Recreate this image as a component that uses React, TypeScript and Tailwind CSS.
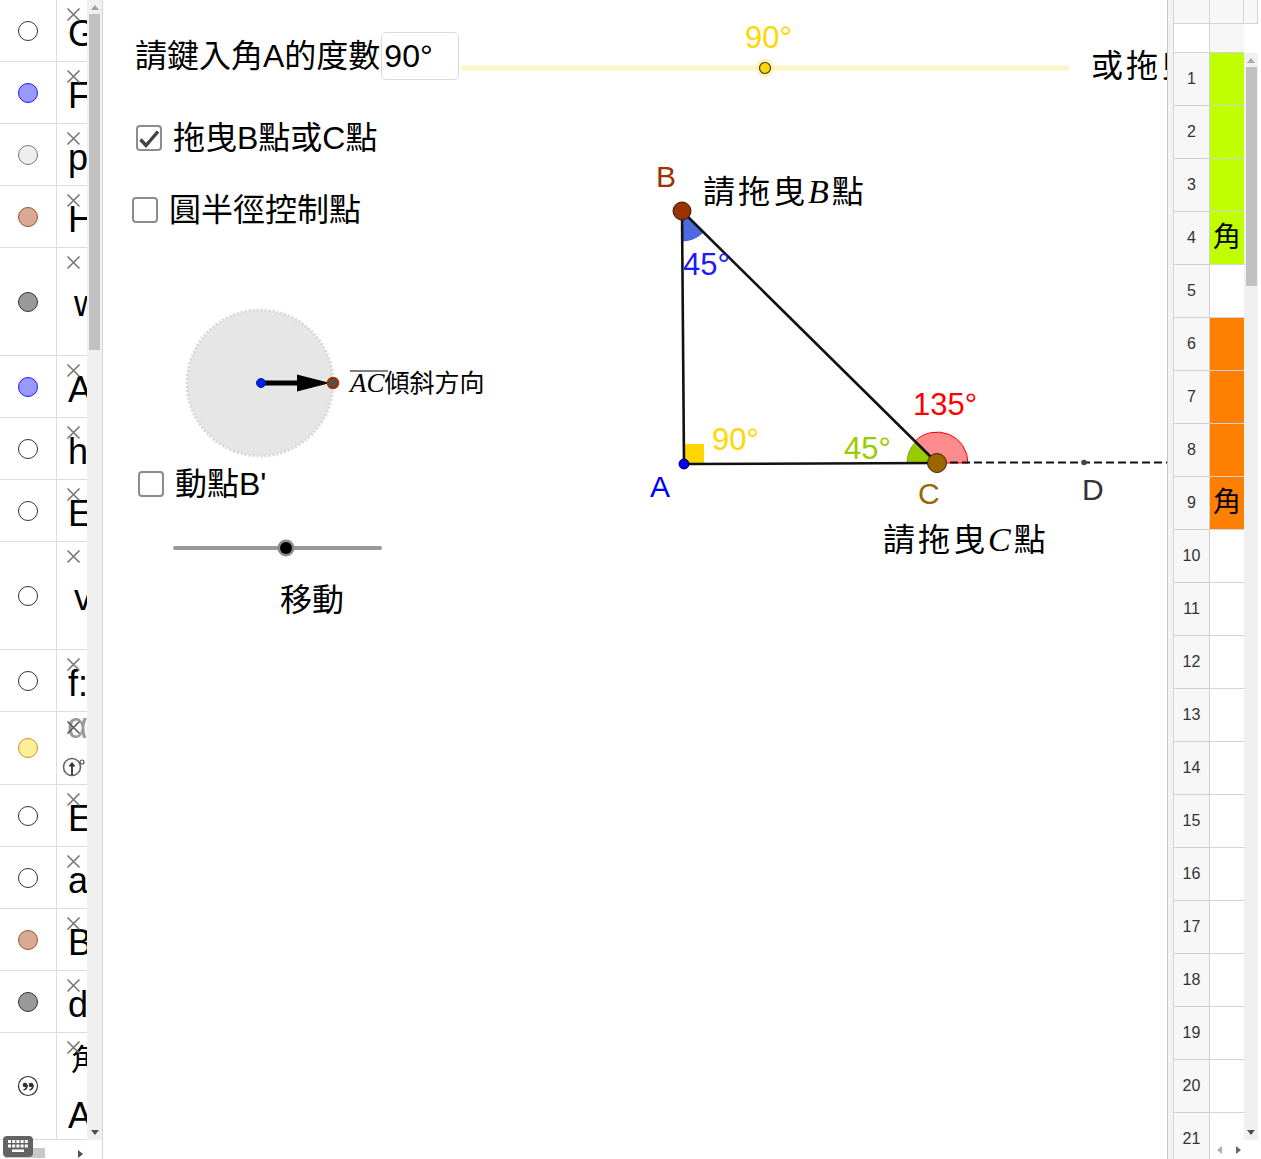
import React from 'react'

type AlgebraRow = {
  h: string
  dot: string
  label: string
  kind?: 'tall' | 'alpha' | 'text'
}

const algebraRows: AlgebraRow[] = [
  { h: 'h-[62px]', dot: 'white', label: 'G' },
  { h: 'h-[62px]', dot: 'blue', label: 'F' },
  { h: 'h-[62px]', dot: 'light', label: 'p' },
  { h: 'h-[62px]', dot: 'tan', label: 'H' },
  { h: 'h-[108px]', dot: 'gray', label: 'w', kind: 'tall' },
  { h: 'h-[62px]', dot: 'blue', label: 'A' },
  { h: 'h-[62px]', dot: 'white', label: 'h' },
  { h: 'h-[62px]', dot: 'white', label: 'E' },
  { h: 'h-[108px]', dot: 'white', label: 'v', kind: 'tall' },
  { h: 'h-[62px]', dot: 'white', label: 'f:' },
  { h: 'h-[73px]', dot: 'yellow', label: 'α', kind: 'alpha' },
  { h: 'h-[62px]', dot: 'white', label: 'E' },
  { h: 'h-[62px]', dot: 'white', label: 'a' },
  { h: 'h-[62px]', dot: 'tan', label: 'B' },
  { h: 'h-[62px]', dot: 'gray', label: 'd' },
  { h: 'flex-1', dot: 'quote', label: 'A', kind: 'text' },
]

const dotStyles: Record<string, string> = {
  white: 'bg-white border-[#333333]',
  blue: 'bg-[#9999ff] border-[#1a1aff]',
  light: 'bg-[#eeeeee] border-[#7a7a7a]',
  tan: 'bg-[#d8aa93] border-[#a0522d]',
  gray: 'bg-[#999999] border-[#333333]',
  yellow: 'bg-[#ffee99] border-[#c8901e]',
}

const serif = "'Liberation Serif', serif"

const Cross = () => (
  <svg width="15" height="15" viewBox="0 0 15 15" className="absolute left-[9px] top-[7px]">
    <path d="M1.5 1.5 L13.5 13.5 M13.5 1.5 L1.5 13.5" stroke="#777777" strokeWidth="1.6" />
  </svg>
)

const Dot = ({ kind }: { kind: string }) => {
  if (kind === 'quote') {
    return (
      <svg width="22" height="22" viewBox="0 0 22 22">
        <circle cx="11" cy="11" r="9.5" fill="white" stroke="#333" strokeWidth="1.2" />
        <circle cx="8" cy="10" r="2.3" fill="#333" />
        <path d="M10.2 10 C10.2 13 8.5 14.5 6.5 15" stroke="#333" strokeWidth="1.6" fill="none" />
        <circle cx="14" cy="10" r="2.3" fill="#333" />
        <path d="M16.2 10 C16.2 13 14.5 14.5 12.5 15" stroke="#333" strokeWidth="1.6" fill="none" />
      </svg>
    )
  }
  return <div className={`h-[20px] w-[20px] rounded-full border ${dotStyles[kind]}`} />
}

const AlgebraView = () => (
  <div className="relative flex h-full w-[103px] shrink-0 flex-col border-r border-[#d6d6d6]">
    <div className="flex min-h-0 flex-1">
      <div className="flex w-[87px] flex-col overflow-hidden">
        {algebraRows.map((r, i) => (
          <div key={i} className={`flex shrink-0 border-b border-[#dcdcdc] ${r.h}`}>
            <div className="flex w-[57px] shrink-0 items-center justify-center border-r border-[#dcdcdc]">
              <Dot kind={r.dot} />
            </div>
            <div className="relative flex-1 overflow-hidden whitespace-nowrap text-[36px]">
              {r.kind === 'alpha' ? (
                <>
                  <div className="pl-[10px] pt-[4px] leading-[20px] text-[#9a9a9a]">α</div>
                  <svg width="15" height="15" viewBox="0 0 15 15" className="absolute left-[9px] top-[8px]">
                    <path d="M1.5 1.5 L13.5 13.5 M13.5 1.5 L1.5 13.5" stroke="#555" strokeWidth="1.6" />
                  </svg>
                  <svg width="26" height="22" viewBox="0 0 26 22" className="ml-[4px] mt-[20px]">
                    <circle cx="11" cy="11" r="8.5" fill="none" stroke="#666" strokeWidth="1.6" />
                    <path d="M11 19 L11 8 M8.5 10.5 L11 7.5 L13.5 10.5" stroke="#333" strokeWidth="1.8" fill="none" />
                    <circle cx="21" cy="6" r="2" fill="none" stroke="#555" strokeWidth="1.2" />
                  </svg>
                </>
              ) : r.kind === 'text' ? (
                <>
                  <Cross />
                  <div className="pl-[14px] pt-[12px] text-[30px] leading-[30px]">角</div>
                  <div className="mt-[23px] pl-[11px] leading-[36px]">A</div>
                </>
              ) : (
                <>
                  <Cross />
                  <div
                    className={
                      r.kind === 'tall'
                        ? 'pl-[17px] pt-[38px] leading-[36px]'
                        : 'pl-[11px] pt-[16px] leading-[36px]'
                    }
                  >
                    {r.label}
                  </div>
                </>
              )}
            </div>
          </div>
        ))}
      </div>
      <div className="relative w-[15px] bg-[#f0f0f0]">
        <svg width="8" height="5" viewBox="0 0 8 5" className="absolute left-[4px] top-[5px]">
          <polygon points="0,5 4,0 8,5" fill="#a0a0a0" />
        </svg>
        <div className="absolute left-[2px] top-[14px] h-[336px] w-[11px] bg-[#c1c1c1]" />
        <svg width="8" height="5" viewBox="0 0 8 5" className="absolute bottom-[5px] left-[4px]">
          <polygon points="0,0 8,0 4,5" fill="#505050" />
        </svg>
      </div>
    </div>
    <div className="relative h-[19px] bg-white">
      <div className="absolute left-[5px] top-[8px] h-[10px] w-[40px] bg-[#c8c8c8]" />
      <svg width="5" height="8" viewBox="0 0 5 8" className="absolute left-[78px] top-[10px]">
        <polygon points="0,0 5,4 0,8" fill="#505050" />
      </svg>
    </div>
    <svg width="30" height="21" viewBox="0 0 30 21" className="absolute bottom-[2px] left-[3px]">
      <rect x="0" y="0" width="30" height="21" rx="4" fill="#636363" />
      {[0, 1, 2, 3, 4].map((c) => (
        <g key={c}>
          <rect x={5 + c * 4.2} y="4" width="3" height="3" fill="white" />
          <rect x={5 + c * 4.2} y="8.5" width="3" height="3" fill="white" />
        </g>
      ))}
      <rect x="9" y="13.5" width="12" height="2.5" fill="white" />
    </svg>
  </div>
)

const CheckRow = ({ checked, label, className }: { checked: boolean; label: React.ReactNode; className: string }) => (
  <div className={`absolute flex items-center gap-[11px] ${className}`}>
    <div className="h-[26px] w-[26px] rounded-[4px] border-2 border-[#8c8c8c] bg-white">
      {checked && (
        <svg width="22" height="22" viewBox="0 0 22 22">
          <path d="M2.5 12.5 L8 18.5 L20 4.5" stroke="#444" strokeWidth="3.4" fill="none" />
        </svg>
      )}
    </div>
    <span className="whitespace-nowrap text-[32px] leading-[32px]">{label}</span>
  </div>
)

const GraphicsView = () => (
  <div className="relative h-full w-[1064px] shrink-0 overflow-hidden bg-white">
    <svg width="1064" height="1159" viewBox="103 0 1064 1159" className="absolute left-0 top-0">
      {/* angle slider */}
      <line x1="463" y1="68" x2="1067" y2="68" stroke="#fff4c6" strokeWidth="5" strokeLinecap="round" />
      <circle cx="765" cy="68" r="9" fill="#fff0b5" />
      <circle cx="765" cy="68" r="5.5" fill="#ffd700" stroke="#3a3a3a" strokeWidth="1.2" />
      <text x="745" y="48" fontSize="31" fill="#ffd700">90°</text>
      <text x="1091" y="77" fontSize="32" letterSpacing="3">或拖曳</text>

      {/* direction circle */}
      <circle cx="260" cy="383" r="73" fill="#e6e6e6" stroke="#d9d9d9" strokeWidth="3" strokeDasharray="2 2" />
      <line x1="261" y1="383" x2="300" y2="383" stroke="#000" strokeWidth="5" />
      <polygon points="297,374.5 330,383 297,391.5" fill="#000" />
      <circle cx="261" cy="383" r="4.5" fill="#0022ee" stroke="#001a99" strokeWidth="1" />
      <circle cx="333" cy="383" r="5" fill="#505050" stroke="#993300" strokeWidth="2.5" />
      <line x1="350" y1="371" x2="388" y2="371" stroke="#000" strokeWidth="1" />
      <text x="350" y="392" fontSize="25">
        <tspan fontFamily={serif} fontStyle="italic" fontSize="27">AC</tspan>傾斜方向
      </text>

      {/* move slider */}
      <line x1="175" y1="548" x2="380" y2="548" stroke="#999999" strokeWidth="4" strokeLinecap="round" />
      <circle cx="286" cy="548" r="8.5" fill="#8c8c8c" />
      <circle cx="286" cy="548" r="6" fill="#000" />

      {/* angles */}
      <path d="M682 211 L682.3 241 A30 30 0 0 0 703.3 232.1 Z" fill="#4d6ae3" stroke="#2b48cc" strokeWidth="0.8" />
      <rect x="684" y="444" width="20" height="20" fill="#ffd700" />
      <path d="M937 463 L968 463 A31 31 0 0 0 915 441.2 Z" fill="#ff8c8c" stroke="#ff0000" strokeWidth="1" />
      <path d="M937 463 L907 463 A30 30 0 0 1 915.7 441.9 Z" fill="#99cc00" stroke="#6f9900" strokeWidth="0.8" />

      {/* segments */}
      <line x1="950" y1="462.5" x2="1167" y2="462.5" stroke="#111" strokeWidth="2" strokeDasharray="8 4" />
      <line x1="682" y1="211" x2="684" y2="464" stroke="#111" strokeWidth="2.6" />
      <line x1="682" y1="211" x2="937" y2="463" stroke="#111" strokeWidth="2.6" />
      <line x1="684" y1="464" x2="937" y2="463" stroke="#111" strokeWidth="2.6" />

      {/* points */}
      <circle cx="1084" cy="462.5" r="2.8" fill="#444" />
      <circle cx="682" cy="211" r="9" fill="#993300" stroke="#3a1400" strokeWidth="1" />
      <circle cx="684" cy="464" r="5" fill="#0000ee" stroke="#000066" strokeWidth="1" />
      <circle cx="937" cy="463" r="9.5" fill="#996600" stroke="#3a2600" strokeWidth="1" />

      {/* labels */}
      <text x="656" y="187" fontSize="30" fill="#993300">B</text>
      <text x="650" y="497" fontSize="30" fill="#0000ff">A</text>
      <text x="918" y="504" fontSize="30" fill="#996600">C</text>
      <text x="1082" y="500" fontSize="30" fill="#333">D</text>
      <text x="683" y="275" fontSize="31" fill="#1a1aff">45°</text>
      <text x="712" y="450" fontSize="31" fill="#ffd700">90°</text>
      <text x="844" y="459" fontSize="31" fill="#99cc00">45°</text>
      <text x="913" y="415" fontSize="31" fill="#ff0000">135°</text>
      <text x="703" y="203" fontSize="32" letterSpacing="3">
        請拖曳<tspan fontFamily={serif} fontStyle="italic" fontSize="34">B</tspan>點
      </text>
      <text x="883" y="551" fontSize="32" letterSpacing="3">
        請拖曳<tspan fontFamily={serif} fontStyle="italic" fontSize="34">C</tspan>點
      </text>
    </svg>

    <div className="absolute left-[32px] top-[32px] flex items-center">
      <span className="whitespace-nowrap text-[32px] leading-[48px]">請鍵入角A的度數</span>
      <div className="ml-[1px] flex h-[48px] w-[78px] items-center rounded-[5px] border border-[#d9d9d9] pl-[2px] text-[32px]">
        90°
      </div>
    </div>

    <CheckRow checked className="left-[33px] top-[122px]" label="拖曳B點或C點" />
    <CheckRow checked={false} className="left-[29px] top-[194px]" label="圓半徑控制點" />
    <CheckRow checked={false} className="left-[35px] top-[468px]" label="動點B'" />

    <div className="absolute left-[177px] top-[584px] text-[32px] leading-[32px]">移動</div>
  </div>
)

const sheetRows = Array.from({ length: 21 }, (_, i) => i + 1)

const cellBg = (n: number) => {
  if (n <= 4) return 'bg-[#c0ff00]'
  if (n >= 6 && n <= 9) return 'bg-[#ff8000]'
  return 'bg-white'
}

const SpreadsheetView = () => (
  <div className="flex h-full w-[94px] shrink-0 border-l border-[#c8c8c8]">
    <div className="w-[6px] border-r border-[#d4d4d4] bg-[#f3f3f3]" />
    <div className="flex w-[36px] flex-col overflow-hidden">
      <div className="h-[24px] shrink-0 border-b border-r border-[#d4d4d4] bg-[#f7f7f7]" />
      <div className="h-[29px] shrink-0 border-b border-r border-[#d4d4d4] bg-white" />
      {sheetRows.map((n) => (
        <div
          key={n}
          className="flex h-[53px] shrink-0 items-center justify-center border-b border-r border-[#d0d0d0] bg-[#f7f7f7] text-[16px] text-[#333]"
        >
          {n}
        </div>
      ))}
    </div>
    <div className="flex w-[34px] flex-col">
      <div className="h-[24px] shrink-0 border-b border-r border-[#d4d4d4] bg-[#f7f7f7]" />
      <div className="h-[29px] shrink-0 border-b border-[#d4d4d4] bg-[#f7f7f7]" />
      <div className="min-h-0 flex-1 overflow-hidden">
        {sheetRows.map((n) => (
          <div
            key={n}
            className={`flex h-[53px] items-center justify-center border-b border-[#d4d4d4] text-[28px] ${cellBg(n)}`}
          >
            {n === 4 || n === 9 ? '角' : ''}
          </div>
        ))}
      </div>
      <div className="flex h-[19px] shrink-0 items-center gap-[14px] bg-white pl-[7px]">
        <svg width="5" height="8" viewBox="0 0 5 8">
          <polygon points="5,0 0,4 5,8" fill="#b0b0b0" />
        </svg>
        <svg width="5" height="8" viewBox="0 0 5 8">
          <polygon points="0,0 5,4 0,8" fill="#666" />
        </svg>
      </div>
    </div>
    <div className="flex w-[14px] flex-col">
      <div className="h-[24px] shrink-0 border-b border-r border-[#d4d4d4] bg-[#f7f7f7]" />
      <div className="h-[29px] shrink-0 bg-white" />
      <div className="relative flex-1 bg-[#f0f0f0]">
        <svg width="8" height="5" viewBox="0 0 8 5" className="absolute left-[3px] top-[5px]">
          <polygon points="0,5 4,0 8,5" fill="#a8a8a8" />
        </svg>
        <div className="absolute left-[2px] top-[14px] h-[219px] w-[11px] bg-[#c1c1c1]" />
        <svg width="8" height="5" viewBox="0 0 8 5" className="absolute bottom-[5px] left-[3px]">
          <polygon points="0,0 8,0 4,5" fill="#505050" />
        </svg>
      </div>
      <div className="h-[19px] shrink-0 bg-white" />
    </div>
  </div>
)

export default function App() {
  return (
    <div className="flex h-[1159px] w-[1261px] overflow-hidden bg-white font-['Liberation_Sans','Noto_Sans_CJK_TC',sans-serif] text-black">
      <AlgebraView />
      <GraphicsView />
      <SpreadsheetView />
    </div>
  )
}
